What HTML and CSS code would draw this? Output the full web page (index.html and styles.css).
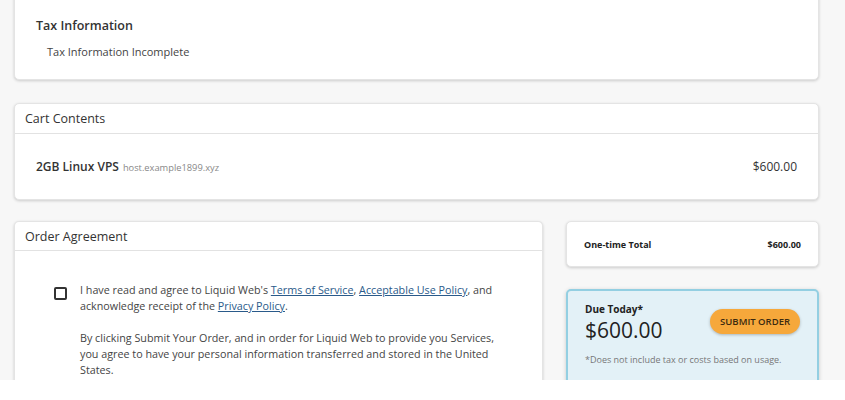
FILE: index.html
```html
<!DOCTYPE html>
<html lang="en">
<head>
<meta charset="utf-8">
<title>Checkout</title>
<link rel="stylesheet" href="styles.css">
</head>
<body>
<div class="page">
  <section class="card tax">
    <h2 class="tax-title">Tax Information</h2>
    <p class="tax-status">Tax Information Incomplete</p>
  </section>

  <section class="card cart">
    <header class="card-head">Cart Contents</header>
    <div class="cart-row">
      <div class="item">
        <span class="item-name">2GB Linux VPS</span>
        <span class="item-host">host.example1899.xyz</span>
      </div>
      <span class="item-price">$600.00</span>
    </div>
  </section>

  <div class="bottom-row">
    <section class="card agreement">
      <header class="card-head agree-head">Order Agreement</header>
      <div class="agree-body">
        <span class="checkbox"></span>
        <div class="agree-text">
          <p>I have read and agree to Liquid Web's <a href="#">Terms of Service</a>, <a href="#">Acceptable Use Policy</a>, and acknowledge receipt of the <a href="#">Privacy Policy</a>.</p>
          <p>By clicking Submit Your Order, and in order for Liquid Web to provide you Services, you agree to have your personal information transferred and stored in the United States.</p>
        </div>
      </div>
    </section>

    <aside class="summary">
      <div class="card total">
        <span>One-time Total</span>
        <span>$600.00</span>
      </div>
      <div class="due">
        <div class="due-top">
          <div class="due-amount">
            <div class="due-label">Due Today*</div>
            <div class="due-price">$600.00</div>
          </div>
          <button class="submit">SUBMIT ORDER</button>
        </div>
        <p class="due-note">*Does not include tax or costs based on usage.</p>
      </div>
    </aside>
  </div>
</div>
</body>
</html>
```
FILE: styles.css
```css
* { box-sizing: border-box; }
html, body { margin: 0; padding: 0; background: #ffffff; }
body {
  font-family: "Open Sans", "Liberation Sans", sans-serif;
  color: #333333;
}
.page {
  height: 380px;
  overflow: hidden;
  background: #f7f7f7;
  padding: 0 26px 0 14px;
}
.card {
  background: #ffffff;
  border: 1px solid #e4e4e4;
  border-radius: 5px;
  box-shadow: 0 1px 3px rgba(0, 0, 0, 0.18);
}
.tax {
  margin-top: -12px;
  padding: 26px 21px 19px;
}
.tax-title {
  margin: 0;
  font-size: 12.5px;
  font-weight: 600;
  line-height: 22px;
  color: #333;
}
.tax-status {
  margin: 7px 0 0 11px;
  font-size: 11px;
  line-height: 16px;
  color: #444;
}
.cart { margin-top: 23px; }
.card-head {
  height: 30px;
  padding: 0 10px;
  display: flex;
  align-items: center;
  font-size: 12.5px;
  font-weight: 500;
  color: #333;
  border-bottom: 1px solid #e2e2e2;
}
.agree-head { height: 29px; }
.cart-row {
  height: 65px;
  display: flex;
  align-items: center;
  justify-content: space-between;
  padding: 0 21px;
}
.item { display: flex; align-items: baseline; gap: 4px; }
.item-name { font-size: 12px; font-weight: 600; color: #333; }
.item-host { font-size: 9.3px; color: #888; }
.item-price { font-size: 12px; color: #333; }

.bottom-row {
  margin-top: 21px;
  display: grid;
  grid-template-columns: 529px 1fr;
  gap: 23px;
  align-items: start;
}
.agreement { height: 200px; border-bottom: none; }
.agree-body {
  display: flex;
  gap: 13px;
  padding: 31px 30px 0 39px;
}
.checkbox {
  flex: none;
  width: 13px;
  height: 13px;
  margin-top: 5px;
  border: 2px solid #333;
  border-radius: 2px;
  background: #fff;
}
.agree-text p {
  margin: 0 0 16px;
  font-size: 10.75px;
  line-height: 16px;
  color: #444;
}
.agree-text a { color: #2a5a8a; text-decoration: underline; }

.summary { display: flex; flex-direction: column; gap: 22px; }
.total {
  height: 46px;
  display: flex;
  align-items: center;
  justify-content: space-between;
  padding: 0 17px;
  font-size: 9px;
  font-weight: 700;
  color: #222;
}
.due {
  height: 120px;
  background: #e3f1f7;
  border: 2px solid #93cfe2;
  border-radius: 5px;
  box-shadow: 0 1px 4px rgba(0, 0, 0, 0.18);
  padding: 11px 17px 0 17px;
}
.due-top { display: flex; justify-content: space-between; align-items: flex-start; }
.due-label { font-size: 10px; font-weight: 700; color: #222; line-height: 14px; }
.due-price { font-size: 21px; color: #222; line-height: 28px; }
.submit {
  margin-top: 7px;
  height: 25px;
  padding: 0 10px;
  border: none;
  border-radius: 13px;
  background: #f6a83b;
  box-shadow: 0 1px 3px rgba(0, 0, 0, 0.25);
  font-family: "Open Sans", "Liberation Sans", sans-serif;
  font-size: 9.5px;
  font-weight: 600;
  color: #3b2a10;
}
.due-note { margin: 9px 0 0; font-size: 9px; color: #777; line-height: 14px; }
```
